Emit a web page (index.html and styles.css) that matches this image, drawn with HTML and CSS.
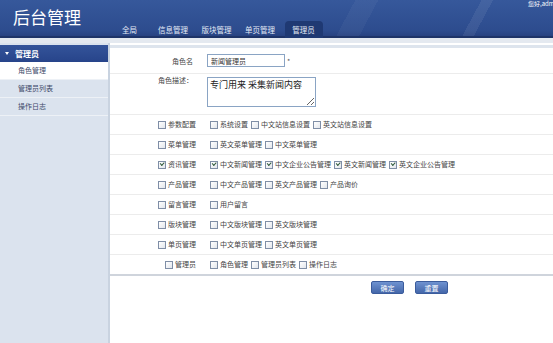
FILE: index.html
```html
<!DOCTYPE html>
<html lang="zh-CN">
<head>
    <meta charset="UTF-8">
    <title>后台管理</title>
    <link rel="stylesheet" href="styles.css">
</head>
<body>
<div class="header">
    <div class="logo">后台管理</div>
    <div class="nav">
        <a href="#">全局</a>
        <a href="#">信息管理</a>
        <a href="#">版块管理</a>
        <a href="#">单页管理</a>
        <a href="#" class="on">管理员</a>
    </div>
    <div class="hello">您好,admin</div>
</div>
<div class="strip"></div>
<div class="main">
    <div class="side">
        <h3>管理员</h3>
        <a href="#" class="on">角色管理</a>
        <a href="#">管理员列表</a>
        <a href="#">操作日志</a>
    </div>
    <div class="content">
        <div class="row row-name">
            <div class="th">角色名</div>
            <div class="td"><input class="txt" type="text" value="新闻管理员"><span class="star">*</span></div>
        </div>
        <div class="row row-desc">
            <div class="th">角色描述：</div>
            <div class="td"><textarea class="area">专门用来 采集新闻内容</textarea></div>
        </div>

        <div class="row cbrow">
            <div class="th"><span class="ck"><i></i>参数配置</span></div>
            <div class="td">
                <span class="ck"><i></i>系统设置</span>
                <span class="ck"><i></i>中文站信息设置</span>
                <span class="ck"><i></i>英文站信息设置</span>
            </div>
        </div>
        <div class="row cbrow">
            <div class="th"><span class="ck"><i></i>菜单管理</span></div>
            <div class="td">
                <span class="ck"><i></i>英文菜单管理</span>
                <span class="ck"><i></i>中文菜单管理</span>
            </div>
        </div>
        <div class="row cbrow">
            <div class="th"><span class="ck"><i class="on"></i>资讯管理</span></div>
            <div class="td">
                <span class="ck"><i class="on"></i>中文新闻管理</span>
                <span class="ck"><i class="on"></i>中文企业公告管理</span>
                <span class="ck"><i class="on"></i>英文新闻管理</span>
                <span class="ck"><i class="on"></i>英文企业公告管理</span>
            </div>
        </div>
        <div class="row cbrow">
            <div class="th"><span class="ck"><i></i>产品管理</span></div>
            <div class="td">
                <span class="ck"><i></i>中文产品管理</span>
                <span class="ck"><i></i>英文产品管理</span>
                <span class="ck"><i></i>产品询价</span>
            </div>
        </div>
        <div class="row cbrow">
            <div class="th"><span class="ck"><i></i>留言管理</span></div>
            <div class="td">
                <span class="ck"><i></i>用户留言</span>
            </div>
        </div>
        <div class="row cbrow">
            <div class="th"><span class="ck"><i></i>版块管理</span></div>
            <div class="td">
                <span class="ck"><i></i>中文版块管理</span>
                <span class="ck"><i></i>英文版块管理</span>
            </div>
        </div>
        <div class="row cbrow">
            <div class="th"><span class="ck"><i></i>单页管理</span></div>
            <div class="td">
                <span class="ck"><i></i>中文单页管理</span>
                <span class="ck"><i></i>英文单页管理</span>
            </div>
        </div>
        <div class="row cbrow last">
            <div class="th"><span class="ck"><i></i>管理员</span></div>
            <div class="td">
                <span class="ck"><i></i>角色管理</span>
                <span class="ck"><i></i>管理员列表</span>
                <span class="ck"><i></i>操作日志</span>
            </div>
        </div>

        <div class="btns">
            <button type="button">确定</button>
            <button type="button">重置</button>
        </div>
    </div>
</div>
</body>
</html>
```

FILE: styles.css
```css
* {
    margin: 0;
    padding: 0;
}

body {
    font-family: "Noto Sans CJK SC", "Liberation Sans", sans-serif;
    font-size: 7px;
    color: #444;
    background-color: #fff;
    overflow: hidden;
}

a {
    text-decoration: none;
}

/* 顶部 */
.header {
    position: relative;
    height: 38px;
    display: flex;
    background:
        linear-gradient(118deg, transparent 0, transparent 84%, rgba(255, 255, 255, .07) 84%, rgba(255, 255, 255, .07) 86%, transparent 86%),
        linear-gradient(118deg, transparent 0, transparent 62%, rgba(255, 255, 255, .04) 62%, rgba(255, 255, 255, .04) 66%, transparent 66%),
        linear-gradient(180deg, #36589b 0%, #2d4c8e 80%, #263f7c 100%);
    box-shadow: inset 0 -2px 0 #1e3468;
    overflow: hidden;
}

.logo {
    width: 110px;
    flex: none;
    padding: 6px 0 0 13px;
    box-sizing: border-box;
    font-size: 17px;
    line-height: 22px;
    color: #fff;
}

.nav {
    display: flex;
    gap: 5.5px;
    align-self: flex-end;
    margin-left: .5px;
}

.nav a {
    width: 38px;
    height: 17px;
    line-height: 17px;
    text-align: center;
    font-size: 7.5px;
    color: #e3eaf6;
}

.nav a.on {
    background-color: #1f3973;
    border-radius: 4px 4px 0 0;
}

.hello {
    position: absolute;
    top: 0;
    left: 528px;
    font-size: 6px;
    line-height: 8px;
    color: #fff;
    white-space: nowrap;
}

.strip {
    height: 5px;
    background-color: #e4e9f0;
}

/* 左侧菜单 */
.main {
    display: flex;
    height: calc(100vh - 43px);
}

.side {
    width: 108px;
    flex: none;
    padding-top: 2px;
    background-color: #dbe3ee;
    border-right: 2px solid #c9d3e0;
}

.side h3 {
    position: relative;
    height: 17px;
    line-height: 17px;
    padding-left: 15px;
    font-size: 8px;
    color: #fff;
    background: linear-gradient(180deg, #34549a, #27448a);
}

.side h3::before {
    content: "";
    position: absolute;
    left: 5px;
    top: 7px;
    border-left: 2.5px solid transparent;
    border-right: 2.5px solid transparent;
    border-top: 3px solid #fff;
}

.side a {
    display: block;
    height: 17px;
    line-height: 17px;
    padding-left: 18px;
    border-bottom: 1px solid #edf1f6;
    color: #3b4868;
}

.side a.on {
    background-color: #fff;
}

/* 表单 */
.content {
    flex: 1;
    margin-top: 2px;
    border-top: 3px solid #dde4ed;
}

.row {
    display: flex;
    border-bottom: 1px solid #ececec;
}

.row .th {
    width: 90px;
    flex: none;
    box-sizing: border-box;
    padding-right: 7px;
    text-align: right;
}

.row .td {
    display: flex;
    align-items: center;
    padding-left: 7px;
}

.row-name {
    height: 25px;
    align-items: center;
}

.row-desc {
    height: 40px;
}

.row-desc .th {
    padding-top: 1px;
    line-height: 10px;
}

.row-desc .td {
    align-items: flex-start;
    padding-top: 3px;
}

.txt {
    width: 78px;
    height: 13px;
    box-sizing: border-box;
    padding: 0 3px;
    border: 1px solid #8aa4c4;
    font-family: inherit;
    font-size: 7px;
    color: #333;
}

.star {
    margin-left: 2px;
    color: #555;
}

.area {
    width: 109px;
    height: 30px;
    box-sizing: border-box;
    padding: 1px 2px;
    border: 1px solid #8aa4c4;
    font-family: inherit;
    font-size: 9px;
    line-height: 12px;
    color: #222;
    resize: both;
}

.cbrow {
    height: 19px;
    line-height: 19px;
}

.cbrow .th {
    padding-right: 1px;
}

.cbrow .td {
    padding-left: 10px;
}

.ck {
    display: inline-flex;
    align-items: center;
    margin-right: 3px;
}

.ck i {
    position: relative;
    display: inline-block;
    width: 6px;
    height: 6px;
    margin-right: 2px;
    border: 1px solid #7f8ea6;
    background: linear-gradient(135deg, #fff, #e2e6ec);
}

.ck i.on::after {
    content: "";
    position: absolute;
    left: 1px;
    top: 0.5px;
    width: 3px;
    height: 1.5px;
    border-left: 1px solid #2f5a3a;
    border-bottom: 1px solid #2f5a3a;
    transform: rotate(-45deg);
}

.cbrow.last {
    border-bottom: 2px solid #cfd4dc;
}

.btns {
    display: flex;
    gap: 11px;
    padding: 5px 0 0 261px;
}

.btns button {
    width: 33px;
    height: 13px;
    padding: 0;
    border: 1px solid #3b5c9c;
    border-radius: 2px;
    background: linear-gradient(180deg, #6e92d0, #4467aa);
    font-family: inherit;
    font-size: 7px;
    color: #fff;
}
```
